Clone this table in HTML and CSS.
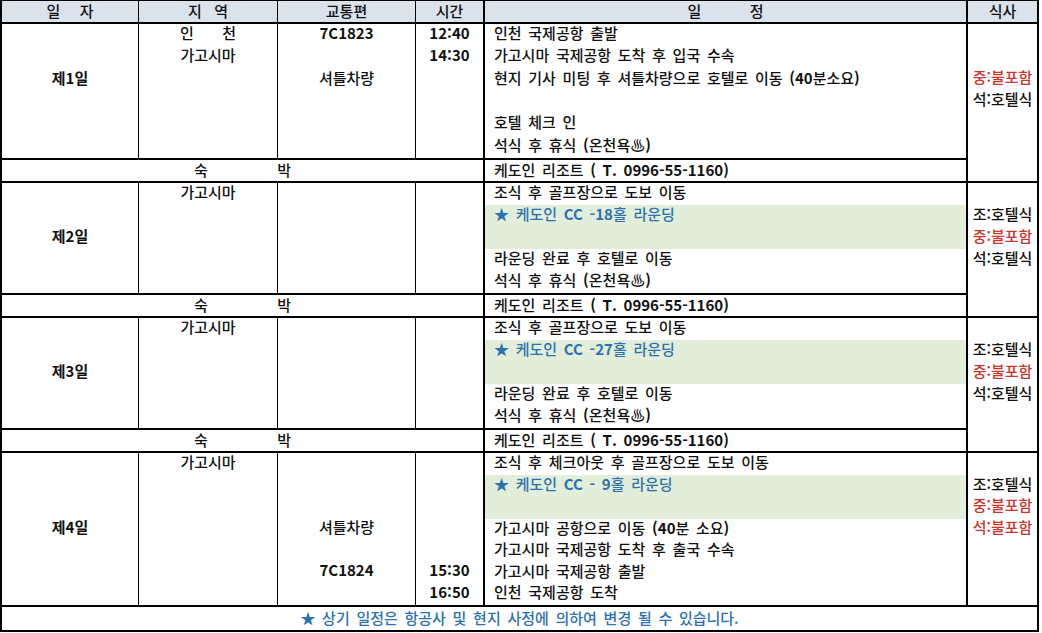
FILE: index.html
```html
<!DOCTYPE html>
<html lang="ko">
<head>
<meta charset="utf-8">
<title>일정표</title>
<link rel="stylesheet" href="styles.css">
</head>
<body>
<div class="sheet">
  <div class="cell hd"><span class="spread w47"><span>일</span><span>자</span></span></div>
  <div class="cell hd"><span class="spread w40"><span>지</span><span>역</span></span></div>
  <div class="cell hd">교통편</div>
  <div class="cell hd">시간</div>
  <div class="cell hd bl"><span class="spread w76"><span>일</span><span>정</span></span></div>
  <div class="cell hd bl">식사</div>

  <!-- 제1일 -->
  <div class="cell c d1"><div class="ln"></div><div class="ln"></div><div class="ln b">제1일</div></div>
  <div class="cell c d1"><div class="ln"><span class="spread w56"><span>인</span><span>천</span></span></div><div class="ln">가고시마</div></div>
  <div class="cell c d1"><div class="ln b">7C1823</div><div class="ln"></div><div class="ln">셔틀차량</div></div>
  <div class="cell c d1"><div class="ln b">12:40</div><div class="ln b">14:30</div></div>
  <div class="cell plan bl d1">
    <div class="ln">인천 국제공항 출발</div>
    <div class="ln">가고시마 국제공항 도착 후 입국 수속</div>
    <div class="ln">현지 기사 미팅 후 셔틀차량으로 호텔로 이동 <b>(40</b>분소요<b>)</b></div>
    <div class="ln"></div>
    <div class="ln">호텔 체크 인</div>
    <div class="ln">석식 후 휴식 <b>(</b>온천욕<span class="onsen">♨</span><b>)</b></div>
  </div>
  <div class="cell meal bl"><div class="ln"></div><div class="ln"></div><div class="ln red">중:불포함</div><div class="ln">석:호텔식</div></div>
  <div class="cell stay-label"><span class="spread w97"><span>숙</span><span>박</span></span></div>
  <div class="cell stay bl">케도인 리조트 <b>( T. 0996-55-1160)</b></div>

  <!-- 제2일 -->
  <div class="cell c"><div class="ln"></div><div class="ln"></div><div class="ln b">제2일</div></div>
  <div class="cell c"><div class="ln">가고시마</div></div>
  <div class="cell c"></div>
  <div class="cell c"></div>
  <div class="cell plan bl">
    <div class="ln">조식 후 골프장으로 도보 이동</div>
    <div class="ln green">★ 케도인 <b>CC -18</b>홀 라운딩</div>
    <div class="ln">라운딩 완료 후 호텔로 이동</div>
    <div class="ln">석식 후 휴식 <b>(</b>온천욕<span class="onsen">♨</span><b>)</b></div>
  </div>
  <div class="cell meal bl"><div class="ln"></div><div class="ln">조:호텔식</div><div class="ln red">중:불포함</div><div class="ln">석:호텔식</div></div>
  <div class="cell stay-label"><span class="spread w97"><span>숙</span><span>박</span></span></div>
  <div class="cell stay bl">케도인 리조트 <b>( T. 0996-55-1160)</b></div>

  <!-- 제3일 -->
  <div class="cell c"><div class="ln"></div><div class="ln"></div><div class="ln b">제3일</div></div>
  <div class="cell c"><div class="ln">가고시마</div></div>
  <div class="cell c"></div>
  <div class="cell c"></div>
  <div class="cell plan bl">
    <div class="ln">조식 후 골프장으로 도보 이동</div>
    <div class="ln green">★ 케도인 <b>CC -27</b>홀 라운딩</div>
    <div class="ln">라운딩 완료 후 호텔로 이동</div>
    <div class="ln">석식 후 휴식 <b>(</b>온천욕<span class="onsen">♨</span><b>)</b></div>
  </div>
  <div class="cell meal bl"><div class="ln"></div><div class="ln">조:호텔식</div><div class="ln red">중:불포함</div><div class="ln">석:호텔식</div></div>
  <div class="cell stay-label"><span class="spread w97"><span>숙</span><span>박</span></span></div>
  <div class="cell stay bl">케도인 리조트 <b>( T. 0996-55-1160)</b></div>

  <!-- 제4일 -->
  <div class="cell c d4"><div class="ln"></div><div class="ln"></div><div class="ln"></div><div class="ln b">제4일</div></div>
  <div class="cell c d4"><div class="ln">가고시마</div></div>
  <div class="cell c d4"><div class="ln"></div><div class="ln"></div><div class="ln"></div><div class="ln">셔틀차량</div><div class="ln"></div><div class="ln b">7C1824</div></div>
  <div class="cell c d4"><div class="ln"></div><div class="ln"></div><div class="ln"></div><div class="ln"></div><div class="ln"></div><div class="ln b">15:30</div><div class="ln b">16:50</div></div>
  <div class="cell plan bl d4">
    <div class="ln">조식 후 체크아웃 후 골프장으로 도보 이동</div>
    <div class="ln green">★ 케도인 <b>CC - 9</b>홀 라운딩</div>
    <div class="ln">가고시마 공항으로 이동 <b>(40</b>분 소요<b>)</b></div>
    <div class="ln">가고시마 국제공항 도착 후 출국 수속</div>
    <div class="ln">가고시마 국제공항 출발</div>
    <div class="ln">인천 국제공항 도착</div>
  </div>
  <div class="cell meal bl d4"><div class="ln"></div><div class="ln">조:호텔식</div><div class="ln red">중:불포함</div><div class="ln red">석:불포함</div></div>

  <div class="cell foot">★ 상기 일정은 항공사 및 현지 사정에 의하여 변경 될 수 있습니다.</div>
</div>
</body>
</html>
```

FILE: styles.css
```css
* {
  box-sizing: border-box;
  margin: 0;
  padding: 0;
}

body {
  margin: 0;
  background: #fff;
  font-family: "Noto Sans CJK KR", "Noto Sans", sans-serif;
  font-size: 15px;
  font-weight: 500;
  color: #111;
  word-spacing: 2.5px;
}

b {
  font-weight: 700;
}

.sheet {
  display: grid;
  width: max-content;
  grid-template-columns: 136px 138px 137px 67px 482px 70px;
  column-gap: 1px;
  row-gap: 2px;
  background: #000;
  padding: 1px 2px 2px 2px;
}

.cell {
  background: #fff;
}

.hd {
  background: #dae2ec;
  height: 21px;
  line-height: 20px;
  text-align: center;
  word-spacing: 0;
}

.bl {
  border-left: 1px solid #000;
}

.c {
  text-align: center;
}

.ln {
  height: 22px;
  line-height: 18px;
  white-space: nowrap;
}

.d1 .ln {
  height: 22.33px;
}

.d4 .ln {
  height: 21.6px;
}

.plan .ln {
  padding-left: 9px;
}

.plan .ln.green {
  height: 44px;
  background: #e2eed9;
  color: #2b72b0;
}

.onsen {
  font-weight: 700;
}

.b {
  font-weight: 700;
  word-spacing: 0;
}

.spread {
  display: inline-flex;
  justify-content: space-between;
  vertical-align: top;
}

.w40 { width: 40px; }
.w47 { width: 47px; }
.w56 { width: 56px; }
.w76 { width: 76px; }
.w97 { width: 97px; }

.stay-label {
  grid-column: span 4;
  height: 21px;
  line-height: 20px;
  text-align: center;
}

.stay {
  height: 21px;
  line-height: 20px;
  padding-left: 9px;
  white-space: nowrap;
}

.meal {
  grid-row: span 2;
  text-align: center;
  word-spacing: 0;
}

.meal.d4 {
  grid-row: span 1;
}

.red {
  color: #c8372d;
}

.foot {
  grid-column: 1 / -1;
  height: 23px;
  line-height: 22px;
  text-align: center;
  color: #2b72b0;
}
```
